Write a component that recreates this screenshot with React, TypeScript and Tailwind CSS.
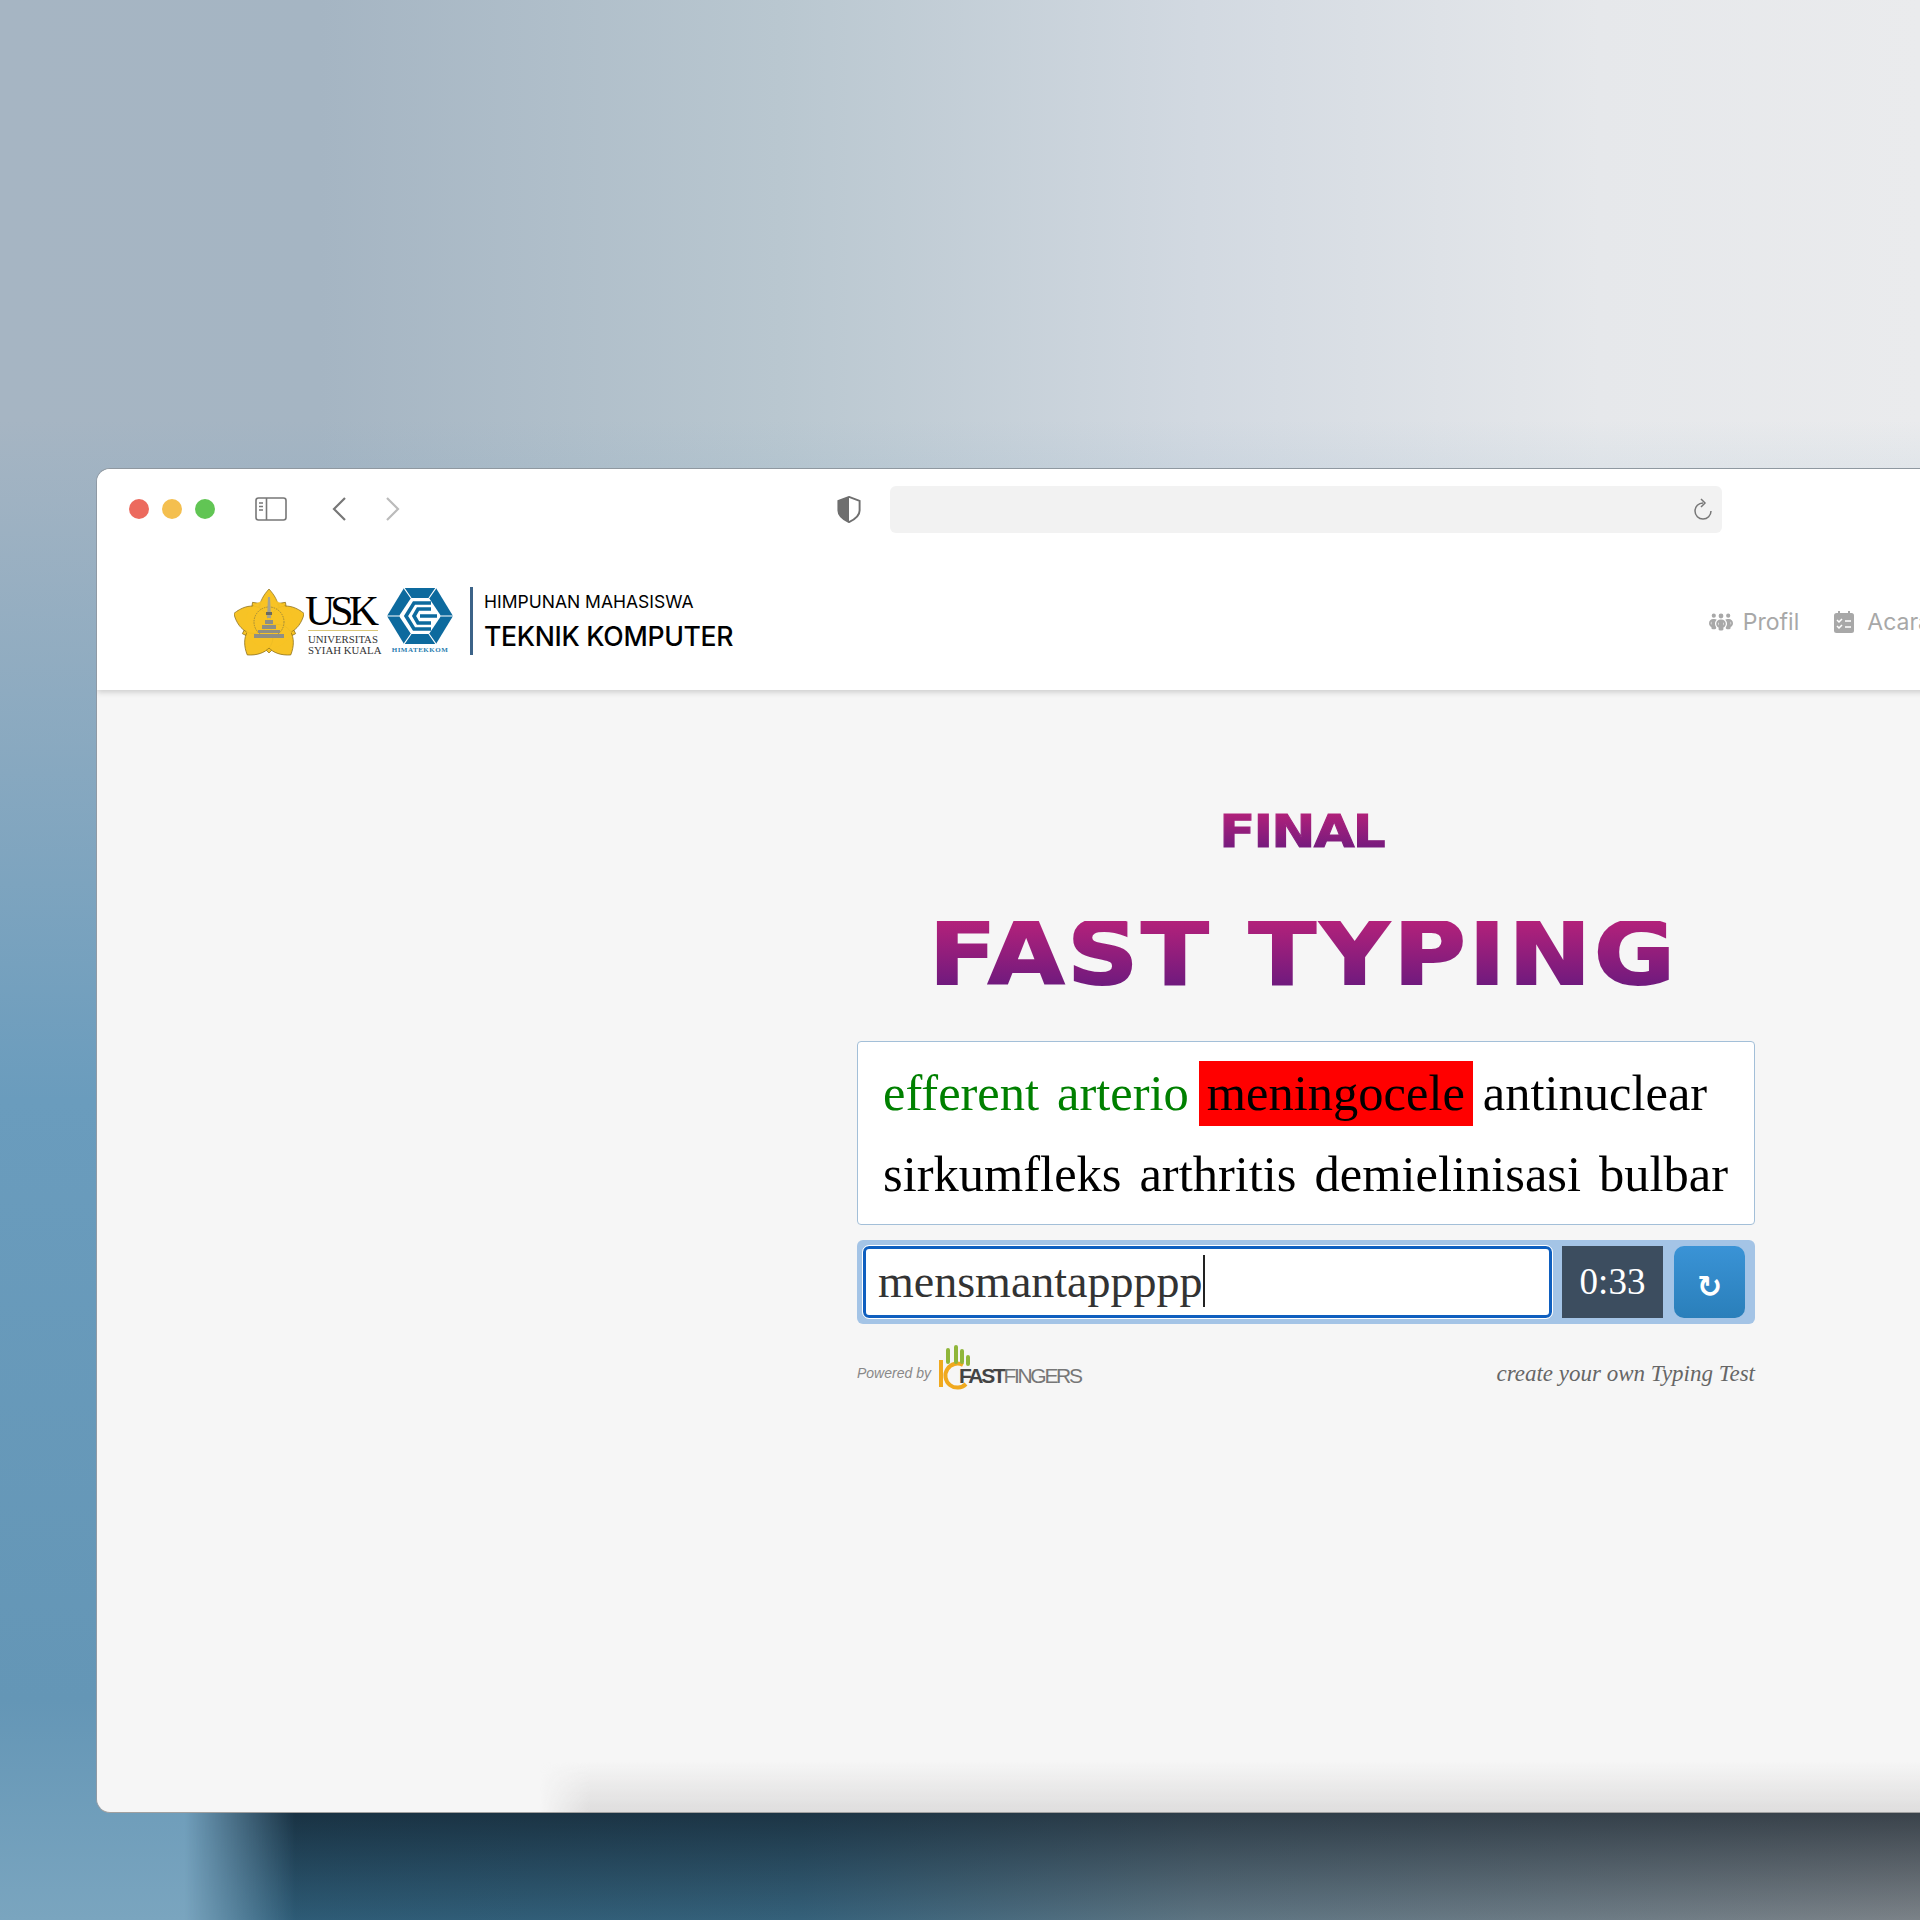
import React from "react";
import { FaPeopleGroup } from "react-icons/fa6";

function Emblem() {
    const petals = [0, 72, 144, 216, 288];
    return (
        <svg width="70" height="68" viewBox="0 0 70 68">
            {petals.map((a) => (
                <path
                    key={`d${a}`}
                    d="M35 9 L40 14 L35 19 L30 14 Z"
                    fill="#f7c325"
                    stroke="#8a6d1a"
                    strokeWidth="0.7"
                    transform={`rotate(${a + 36} 35 37)`}
                />
            ))}
            {petals.map((a) => (
                <path
                    key={a}
                    d={
                        a === 0
                            ? "M35 37 C21 26 24 13 35 1 C46 13 49 26 35 37 Z"
                            : "M35 37 C15 28 19 10 35 0 C51 10 55 28 35 37 Z"
                    }
                    fill="#f7c325"
                    stroke="#8a6d1a"
                    strokeWidth="0.7"
                    transform={`rotate(${a} 35 37)`}
                />
            ))}
            <circle cx="35" cy="36" r="24" fill="#f7c325" opacity="0.9" />
            <circle cx="35" cy="34" r="15" fill="none" stroke="#a08a3a" strokeWidth="1" strokeDasharray="1.5 1" />
            <path d="M34 9 L36 9 L37 30 L33 30 Z" fill="#a3a396" />
            <path d="M32 24 H38 V27 H32 Z" fill="#6a6a60" />
            <path d="M31 32 H39 V36 H31 Z M28 37 H42 V41 H28 Z M24 42 H46 V45 H24 Z M20 46 H50 V50 H20 Z" fill="#8f8f85" />
        </svg>
    );
}

function HexLogo() {
    return (
        <svg width="66" height="56" viewBox="0 0 66 56">
            <path d="M17 0 H49 L66 28 L49 56 H17 L0 28 Z" fill="#0d6a9e" />
            <path d="M17 0 L24 10 M49 0 L42 10 M0 28 H12 M66 28 H54 M17 56 L24 46 M49 56 L42 46" stroke="#fff" strokeWidth="1.2" />
            <path d="M24 10 H42 L54 28 L42 46 H24 L12 28 Z" fill="#fff" />
            <path
                d="M44 15 H27 L19 28 L27 41 H44 M44 21 H31 L27 28 L31 35 H44 M33 28 H50"
                fill="none"
                stroke="#0d6a9e"
                strokeWidth="3.6"
            />
        </svg>
    );
}

function ChecklistIcon() {
    return (
        <svg width="20" height="22" viewBox="0 0 20 22">
            <rect x="0" y="2" width="20" height="20" rx="2.5" fill="#a8a8a8" />
            <path d="M5 0 V3 M15 0 V3" stroke="#a8a8a8" strokeWidth="2" />
            <path d="M3 9 L5 11 L8 8 M3 15 L5 17 L8 14 M11 10 H17 M11 16 H17" fill="none" stroke="#fff" strokeWidth="1.5" />
        </svg>
    );
}

function SidebarIcon() {
    return (
        <svg width="32" height="24" viewBox="0 0 32 24" fill="none">
            <rect x="1" y="1" width="30" height="22" rx="2.5" stroke="#777" strokeWidth="1.6" />
            <path d="M11.5 1 V23" stroke="#777" strokeWidth="1.6" />
            <path d="M4 6 H8 M4 9.5 H8 M4 13 H8" stroke="#777" strokeWidth="1.4" />
        </svg>
    );
}

function Chevron({ flip, color }: { flip?: boolean; color: string }) {
    return (
        <svg width="14" height="24" viewBox="0 0 14 24" fill="none">
            <path d={flip ? "M1 1 L12 12 L1 23" : "M13 1 L2 12 L13 23"} stroke={color} strokeWidth="2.2" />
        </svg>
    );
}

function ShieldIcon() {
    return (
        <svg width="24" height="27" viewBox="0 0 24 28">
            <path d="M12 1 L23 5 V15 Q23 22 12 27 Q1 22 1 15 V5 Z" fill="#fff" stroke="#6f6f6f" strokeWidth="2" />
            <path d="M12 1 L1 5 V15 Q1 22 12 27 Z" fill="#6f6f6f" />
        </svg>
    );
}

function ReloadIcon() {
    return (
        <svg width="20" height="23" viewBox="0 0 20 23" fill="none">
            <path d="M10 5 A8 8 0 1 0 18 13" stroke="#777" strokeWidth="1.5" />
            <path d="M8 1 L12 5 L8 9" stroke="#777" strokeWidth="1.5" />
        </svg>
    );
}

function HandLogo() {
    return (
        <svg width="40" height="46" viewBox="0 0 40 46">
            <path d="M2 16 V43" stroke="#f0a91e" strokeWidth="4" />
            <path d="M27 40 A12 12 0 1 1 24 21" fill="none" stroke="#f0a91e" strokeWidth="4" />
            <path d="M9 18 V6 M17 18 V3 M23 18 V7 M29 20 V13" stroke="#8fb63a" strokeWidth="4" strokeLinecap="round" />
        </svg>
    );
}

export default function App() {
    return (
        <div className="relative h-[1920px] w-[1920px] overflow-hidden bg-[linear-gradient(180deg,rgba(107,157,189,0)_420px,#6a9cbd_1100px,#6496b6_1700px,#7aa5bf_1920px),linear-gradient(90deg,#a6b5c3_0px,#a5b5c3_320px,#b9c7d0_780px,#d2d9e1_1200px,#e6e8eb_1600px,#eaebed_1920px)] pt-[468px] pl-[96px]">
            {/* dark shadow under the window */}
            <div className="absolute bottom-0 left-[185px] h-[108px] w-[1735px] bg-[linear-gradient(180deg,rgba(10,20,30,0.58),rgba(10,20,30,0)),linear-gradient(90deg,#2c5a75_0px,#35617a_615px,#5d7482_1015px,#7b8288_1735px)] [mask-image:linear-gradient(90deg,transparent,black_110px)]" />

            <div className="relative h-[1345px] w-[1900px] overflow-hidden rounded-l-[14px] border-t border-b border-l border-t-[#8f98a0] border-b-[#a0a0a0] border-l-[#8f9aa5] bg-[#f6f6f6]">
                {/* browser toolbar */}
                <div className="relative z-10 flex h-[80px] items-center bg-white pl-[32px]">
                    <div className="flex gap-[13px]">
                        <div className="h-5 w-5 rounded-full bg-[#ec6a5e]" />
                        <div className="h-5 w-5 rounded-full bg-[#f4bf4f]" />
                        <div className="h-5 w-5 rounded-full bg-[#61c554]" />
                    </div>
                    <div className="ml-[40px]">
                        <SidebarIcon />
                    </div>
                    <div className="ml-[45px]">
                        <Chevron color="#777" />
                    </div>
                    <div className="ml-[40px]">
                        <Chevron flip color="#bbb" />
                    </div>
                    <div className="ml-[437px]">
                        <ShieldIcon />
                    </div>
                    <div className="ml-[29px] flex h-[47px] w-[832px] items-center justify-end rounded-md bg-[#f2f2f2] pr-[9px]">
                        <ReloadIcon />
                    </div>
                </div>

                {/* site nav */}
                <div className="relative flex h-[141px] items-start bg-white pt-[39px] pl-[137px] shadow-[0_2px_6px_rgba(0,0,0,0.18)]">
                    <Emblem />
                    <div className="mt-[6px] ml-[1px] flex w-[74px] flex-col font-['Liberation_Serif',serif] whitespace-nowrap text-black">
                        <span className="text-[42px] leading-[34px] tracking-[-5px]">USK</span>
                        <div className="mt-[2px] ml-[3px] h-px w-[70px] bg-[#d9c67a]" />
                        <span className="mt-[3px] ml-[3px] text-[10.8px] leading-[11px] text-[#333]">UNIVERSITAS</span>
                        <span className="ml-[3px] text-[10.8px] leading-[11px] text-[#333]">SYIAH KUALA</span>
                    </div>
                    <div className="ml-[8px] flex flex-col items-center">
                        <HexLogo />
                        <span className="mt-[2px] font-['Liberation_Serif',serif] text-[7px] leading-[9px] font-bold tracking-[0.5px] text-[#2a7db0]">
                            HIMATEKKOM
                        </span>
                    </div>
                    <div className="-mt-px ml-[17px] h-[68px] w-[3px] bg-[#3c6388]" />
                    <div className="ml-[11px] flex flex-col font-['Inter',sans-serif] text-black">
                        <span className="mt-[2px] text-[17.5px] leading-[24px]">HIMPUNAN MAHASISWA</span>
                        <span className="mt-[4px] text-[26.6px] leading-[36px] font-medium tracking-[-0.3px]">TEKNIK KOMPUTER</span>
                    </div>
                    <div className="mt-[20px] ml-auto flex items-center pr-[65px] font-['Inter',sans-serif] text-[23px] leading-[28px] text-[#a8a8a8]">
                        <FaPeopleGroup size={24} />
                        <span className="ml-[10px]">Profil</span>
                        <div className="ml-[35px]">
                            <ChecklistIcon />
                        </div>
                        <span className="ml-[13px]">Acara</span>
                    </div>
                </div>

                {/* soft shade along the bottom edge */}
                <div className="absolute right-0 bottom-0 left-[443px] h-[50px] bg-[linear-gradient(180deg,rgba(222,222,222,0),#dedddd)] [mask-image:linear-gradient(90deg,transparent,black_50px)]" />

                {/* typing test */}
                <div className="relative ml-[760px] flex w-[898px] flex-col">
                    <div className="mt-[122px] flex justify-center pr-[9px]">
                        <h2 className="scale-x-[1.2] bg-[linear-gradient(180deg,#b3217a_0%,#6e1a7e_100%)] bg-clip-text font-['DejaVu_Sans',sans-serif] text-[44px] leading-[40px] font-bold tracking-[-1.5px] text-transparent [-webkit-text-stroke:1px_transparent]">
                            FINAL
                        </h2>
                    </div>
                    <div className="mt-[69px] flex justify-center pr-[6px]">
                        <h1 className="scale-x-[1.12] bg-[linear-gradient(180deg,#b3217a_0%,#6e1a7e_100%)] bg-clip-text font-['DejaVu_Sans',sans-serif] text-[88px] leading-[66px] font-bold tracking-[2.7px] text-transparent [-webkit-text-stroke:2px_transparent]">
                            FAST TYPING
                        </h1>
                    </div>

                    <div className="mt-[54px] h-[184px] rounded border border-[#a3bfd8] bg-white pt-[19px] pr-[26px] pl-[25px] font-['Liberation_Serif',serif] text-[50.5px] text-black">
                        <div className="flex h-[65px] items-center">
                            <span className="leading-[65px] text-[#008000]">efferent</span>
                            <span className="ml-[18px] leading-[65px] text-[#008000]">arterio</span>
                            <span className="ml-[10px] bg-[#ff0000] px-[8px] leading-[65px]">meningocele</span>
                            <span className="ml-[10px] leading-[65px]">antinuclear</span>
                        </div>
                        <div className="mt-[16px] flex h-[65px] items-center justify-between">
                            <span>sirkumfleks</span>
                            <span>arthritis</span>
                            <span>demielinisasi</span>
                            <span>bulbar</span>
                        </div>
                    </div>

                    <div className="mt-[15px] flex h-[84px] items-center rounded-md bg-[#a4c4e6] px-[6px]">
                        <div className="flex h-[72px] w-[689px] items-center rounded-md border-[3px] border-[#0f5fbf] bg-white pb-[2px] pl-[12px] font-['Liberation_Serif',serif] text-[46px] text-[#333] outline outline-white">
                            <span>mensmantappppp</span>
                            <span className="h-[52px] w-[2px] bg-[#222]" />
                        </div>
                        <div className="ml-[10px] flex h-[72px] w-[101px] items-center justify-center bg-[#3c4d5f] font-['Liberation_Serif',serif] text-[37px] text-white">
                            0:33
                        </div>
                        <div className="ml-[11px] flex h-[72px] w-[71px] items-center justify-center rounded-[10px] bg-[linear-gradient(180deg,#3a93d6,#2a7fba)] pt-[8px] font-['DejaVu_Sans',sans-serif] text-[30px] font-bold text-white">
                            ↻
                        </div>
                    </div>

                    <div className="mt-[20px] flex items-start justify-between">
                        <div className="flex items-start">
                            <span className="mt-[19px] font-['Liberation_Sans',sans-serif] text-[14px] leading-[20px] text-[#888] italic">Powered by</span>
                            <div className="ml-[8px]">
                                <HandLogo />
                            </div>
                            <div className="mt-[20px] -ml-[20px] font-['Liberation_Sans',sans-serif] text-[21px] leading-[24px] tracking-[-2.3px] text-[#777]">
                                <span className="font-bold text-[#444]">FAST</span>FINGERS
                            </div>
                        </div>
                        <span className="mt-[16px] font-['Liberation_Serif',serif] text-[23px] leading-[28px] text-[#666] italic">create your own Typing Test</span>
                    </div>
                </div>
            </div>
        </div>
    );
}
